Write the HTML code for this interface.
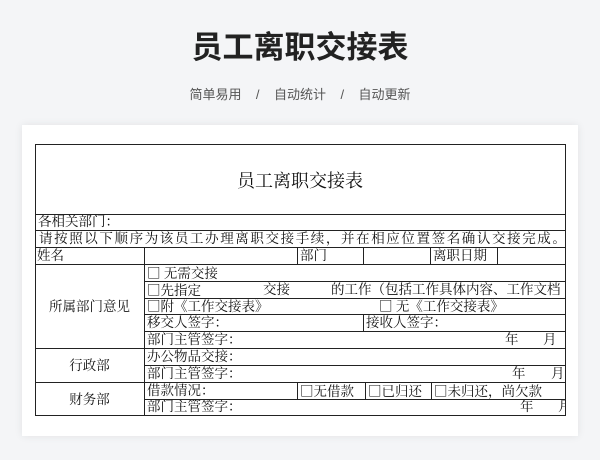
<!DOCTYPE html>
<html><head><meta charset="utf-8"><style>
body{margin:0;width:600px;height:460px;background:#f4f5f7;position:relative;overflow:hidden;font-family:"Liberation Serif","Noto Serif CJK SC",serif;}
.h1{position:absolute;left:0;width:600px;top:22px;text-align:center;font:bold 31px "Liberation Sans","Noto Sans CJK SC",sans-serif;color:#222;}
.sub{position:absolute;left:0;width:600px;top:84px;text-align:center;font:13px "Liberation Sans","Noto Sans CJK SC",sans-serif;color:#555;}
.card{position:absolute;left:22px;top:125px;width:556px;height:311px;background:#fff;box-shadow:0 0 8px rgba(0,0,0,.08);}
.h,.v{position:absolute;background:#222;}
.h{height:1px}.v{width:1px}
.t{position:absolute;font-size:13.5px;color:#111;white-space:nowrap;line-height:17px;}
.b{font-family:"Noto Serif CJK SC",serif;}
.clip{position:absolute;left:35px;top:144px;width:530px;height:272px;overflow:hidden}
</style></head><body>
<div class="h1">员工离职交接表</div>
<div class="sub">简单易用&nbsp;&nbsp;&nbsp;&nbsp;/&nbsp;&nbsp;&nbsp;&nbsp;自动统计&nbsp;&nbsp;&nbsp;&nbsp;/&nbsp;&nbsp;&nbsp;&nbsp;自动更新</div>
<div class="card"></div>
<div class="clip">
<div style="position:relative;left:-35px;top:-144px;width:600px;height:460px">
<div class="t" style="left:0;width:600px;text-align:center;top:170px;font-size:18px;line-height:22px">员工离职交接表</div>
<div class="t" style="left:38px;top:213px">各相关部门：</div>
<div class="t" style="left:39px;top:230px;letter-spacing:1.6px">请按照以下顺序为该员工办理离职交接手续，并在相应位置签名确认交接完成。</div>
<div class="t" style="left:37px;top:247px">姓名</div>
<div class="t" style="left:300px;top:247px">部门</div>
<div class="t" style="left:433px;top:247px">离职日期</div>
<div class="t" style="left:147px;top:264px"><span class="b">□</span> 无需交接</div>
<div class="t" style="left:147px;top:281px"><span class="b">□</span>先指定</div>
<div class="t" style="left:263px;top:281px">交接</div>
<div class="t" style="left:331px;top:281px">的工作（包括工作具体内容、工作文档</div>
<div class="t" style="left:147px;top:297px"><span class="b">□</span>附《工作交接表》</div>
<div class="t" style="left:379px;top:297px"><span class="b">□</span> 无《工作交接表》</div>
<div class="t" style="left:147px;top:314px">移交人签字：</div>
<div class="t" style="left:366px;top:314px">接收人签字：</div>
<div class="t" style="left:147px;top:331px">部门主管签字：</div>
<div class="t" style="left:505px;top:331px">年</div>
<div class="t" style="left:543px;top:331px">月</div>
<div class="t" style="left:147px;top:348px">办公物品交接：</div>
<div class="t" style="left:147px;top:365px">部门主管签字：</div>
<div class="t" style="left:512px;top:365px">年</div>
<div class="t" style="left:551px;top:365px">月</div>
<div class="t" style="left:147px;top:382px">借款情况：</div>
<div class="t" style="left:300px;top:382px"><span class="b">□</span>无借款</div>
<div class="t" style="left:368px;top:382px"><span class="b">□</span>已归还</div>
<div class="t" style="left:434px;top:382px"><span class="b">□</span>未归还，尚欠款</div>
<div class="t" style="left:147px;top:398px">部门主管签字：</div>
<div class="t" style="left:520px;top:398px">年</div>
<div class="t" style="left:558px;top:398px">月</div>
<div class="t" style="left:35px;width:109px;text-align:center;top:298px">所属部门意见</div>
<div class="t" style="left:35px;width:109px;text-align:center;top:357px">行政部</div>
<div class="t" style="left:35px;width:109px;text-align:center;top:391px">财务部</div>
</div></div>
<div class="h" style="left:35px;width:531px;top:144px"></div>
<div class="h" style="left:35px;width:531px;top:214px"></div>
<div class="h" style="left:35px;width:531px;top:230px"></div>
<div class="h" style="left:35px;width:531px;top:247px"></div>
<div class="h" style="left:35px;width:531px;top:264px"></div>
<div class="h" style="left:144px;width:422px;top:281px"></div>
<div class="h" style="left:144px;width:422px;top:298px"></div>
<div class="h" style="left:144px;width:422px;top:314px"></div>
<div class="h" style="left:144px;width:422px;top:331px"></div>
<div class="h" style="left:35px;width:531px;top:348px"></div>
<div class="h" style="left:144px;width:422px;top:365px"></div>
<div class="h" style="left:35px;width:531px;top:382px"></div>
<div class="h" style="left:144px;width:422px;top:399px"></div>
<div class="h" style="left:35px;width:531px;top:415px"></div>
<div class="v" style="left:35px;top:144px;height:272px"></div>
<div class="v" style="left:565px;top:144px;height:272px"></div>
<div class="v" style="left:144px;top:247px;height:169px"></div>
<div class="v" style="left:297px;top:247px;height:17px"></div>
<div class="v" style="left:363px;top:247px;height:17px"></div>
<div class="v" style="left:430px;top:247px;height:17px"></div>
<div class="v" style="left:497px;top:247px;height:17px"></div>
<div class="v" style="left:363px;top:314px;height:17px"></div>
<div class="v" style="left:297px;top:382px;height:17px"></div>
<div class="v" style="left:365px;top:382px;height:17px"></div>
<div class="v" style="left:431px;top:382px;height:17px"></div>
</body></html>
